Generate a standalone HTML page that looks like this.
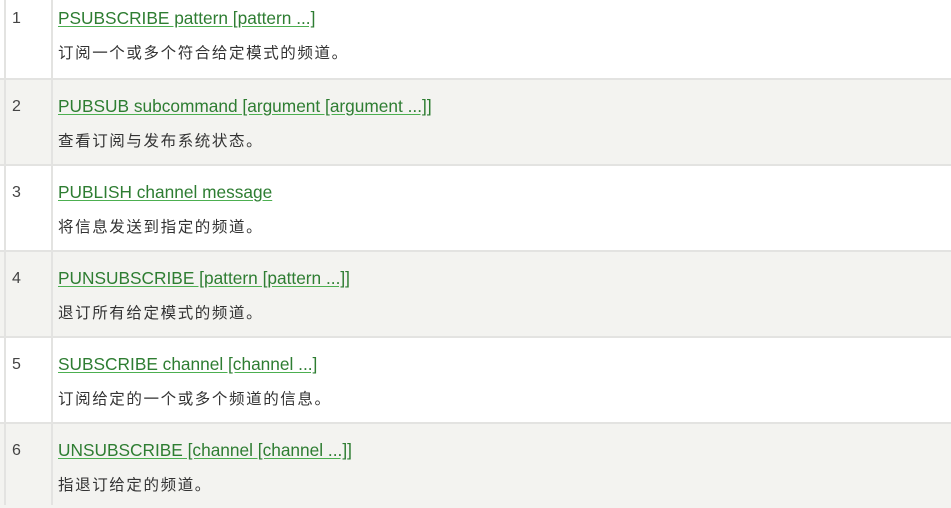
<!DOCTYPE html>
<html><head><meta charset="utf-8"><style>
body{margin:0;width:951px;height:505px;overflow:hidden;background:#fff;position:relative;font-family:"Liberation Sans","Noto Sans CJK SC",sans-serif}
.row{position:absolute;left:0;width:951px;height:86px;border-top:2px solid #e3e3e1;box-sizing:border-box}
.g{background:#f3f3f0}
.vl{position:absolute;top:0;bottom:0;width:2px;background:#e3e3e1}
.n{position:absolute;left:12px;font-size:16px;color:#444;line-height:20px}
.l{position:absolute;left:58px;font-size:17.3px;line-height:20px;color:#2e7d32;text-decoration:underline;text-decoration-color:#4caf50;text-underline-offset:2px}
.d{position:absolute;left:58px;font-size:15.5px;letter-spacing:1.6px;line-height:20px;color:#333}
</style></head><body>
<div class="row" style="top:-8px;border-top:none"><span class="n" style="top:17px">1</span><span class="l" style="top:16px">PSUBSCRIBE pattern [pattern ...]</span><span class="d" style="top:52px">订阅一个或多个符合给定模式的频道。</span></div>
<div class="row g" style="top:78px"><span class="n" style="top:17px">2</span><span class="l" style="top:16px">PUBSUB subcommand [argument [argument ...]]</span><span class="d" style="top:52px">查看订阅与发布系统状态。</span></div>
<div class="row" style="top:164px"><span class="n" style="top:17px">3</span><span class="l" style="top:16px">PUBLISH channel message</span><span class="d" style="top:52px">将信息发送到指定的频道。</span></div>
<div class="row g" style="top:250px"><span class="n" style="top:17px">4</span><span class="l" style="top:16px">PUNSUBSCRIBE [pattern [pattern ...]]</span><span class="d" style="top:52px">退订所有给定模式的频道。</span></div>
<div class="row" style="top:336px"><span class="n" style="top:17px">5</span><span class="l" style="top:16px">SUBSCRIBE channel [channel ...]</span><span class="d" style="top:52px">订阅给定的一个或多个频道的信息。</span></div>
<div class="row g" style="top:422px"><span class="n" style="top:17px">6</span><span class="l" style="top:16px">UNSUBSCRIBE [channel [channel ...]]</span><span class="d" style="top:52px">指退订给定的频道。</span></div>
<div class="vl" style="left:4px"></div>
<div class="vl" style="left:51px"></div>
</body></html>
